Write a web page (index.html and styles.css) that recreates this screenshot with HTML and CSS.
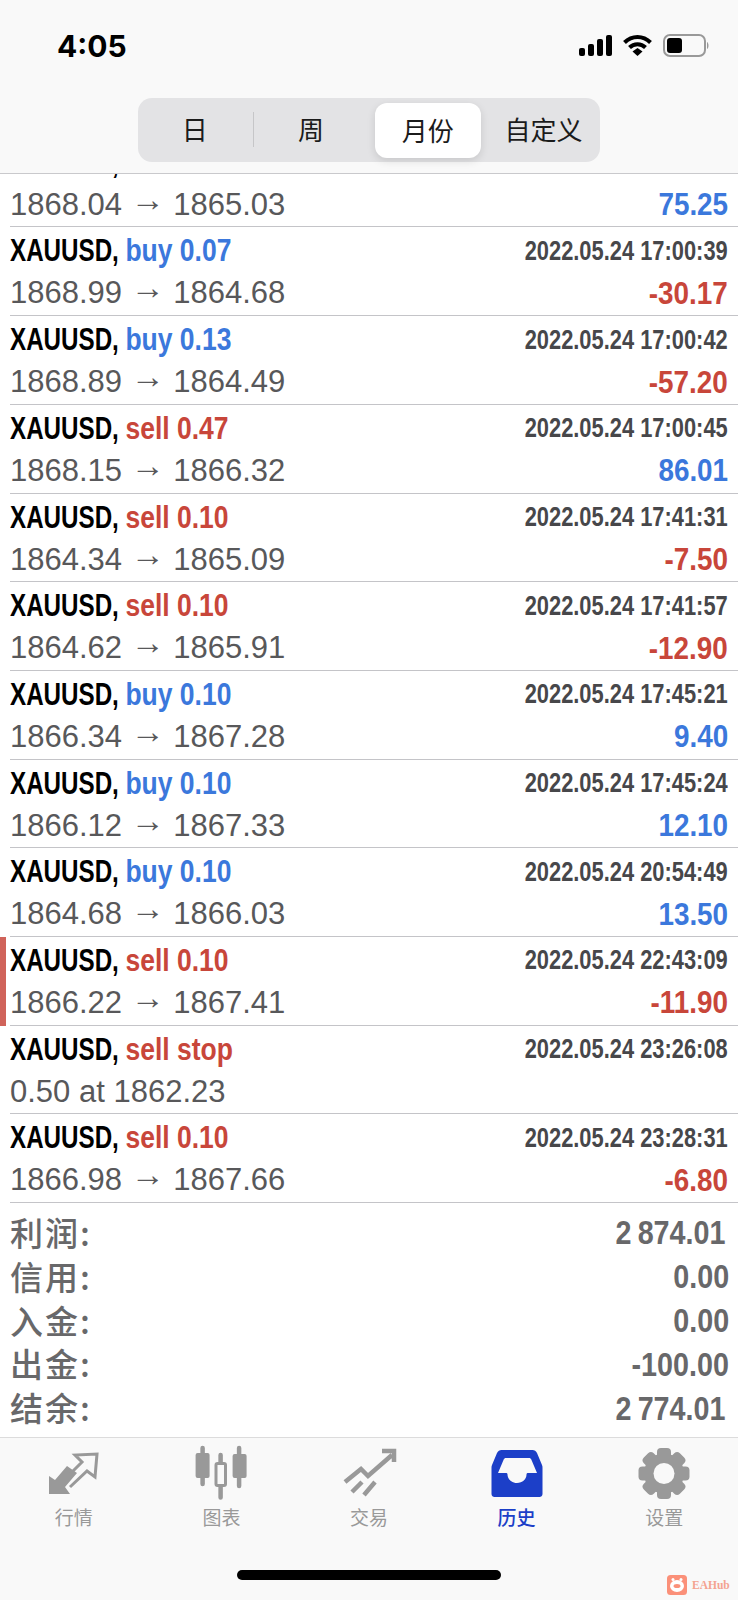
FILE: index.html
```html
<!DOCTYPE html>
<html lang="zh">
<head>
<meta charset="utf-8">
<title>历史</title>
<link rel="stylesheet" href="styles.css">
</head>
<body>
<div class="page">
  <header class="top">
    <div class="status">
      <span class="clock">4:05</span>
      <div class="status-icons">
        <svg class="ic-signal" width="33" height="21" viewBox="0 0 33 21"><rect x="0" y="13" width="6" height="8" rx="2"/><rect x="9" y="9" width="6" height="12" rx="2"/><rect x="18" y="4" width="6" height="17" rx="2"/><rect x="27" y="0" width="6" height="21" rx="2"/></svg>
        <svg class="ic-wifi" width="29" height="22" viewBox="0 0 29 22"><path d="M1.5 8.5C9 1 20 1 27.5 8.5" fill="none" stroke="#000" stroke-width="4"/><path d="M6.5 13.5C11 9 18 9 22.5 13.5" fill="none" stroke="#000" stroke-width="4"/><path d="M9.5 17.5L14.5 14l5 3.500L14.500 22z"/></svg>
        <svg class="ic-batt" width="46" height="23" viewBox="0 0 46 23"><rect x="1" y="1" width="41" height="21" rx="6" fill="none" stroke="#999" stroke-width="2"/><rect x="4" y="4" width="15" height="15" rx="3"/><path d="M44 8c2 1 2 6 0 7z" fill="#999"/></svg>
      </div>
    </div>
    <div class="seg">
      <div class="seg-item seg-divided">日</div>
      <div class="seg-item">周</div>
      <div class="seg-item seg-on">月份</div>
      <div class="seg-item">自定义</div>
    </div>
  </header>

  <main class="list">
    <div class="row"><div class="line"><span class="sym">XAUUSD, <span class="sell">sell 0.25</span></span><span class="time">2022.05.24 17:00:36</span></div><div class="line"><span class="px">1868.04 <span class="arrow">→</span> 1865.03</span><span class="val up">75.25</span></div></div>
    <div class="row"><div class="line"><span class="sym">XAUUSD, <span class="buy">buy 0.07</span></span><span class="time">2022.05.24 17:00:39</span></div><div class="line"><span class="px">1868.99 <span class="arrow">→</span> 1864.68</span><span class="val down">-30.17</span></div></div>
    <div class="row"><div class="line"><span class="sym">XAUUSD, <span class="buy">buy 0.13</span></span><span class="time">2022.05.24 17:00:42</span></div><div class="line"><span class="px">1868.89 <span class="arrow">→</span> 1864.49</span><span class="val down">-57.20</span></div></div>
    <div class="row"><div class="line"><span class="sym">XAUUSD, <span class="sell">sell 0.47</span></span><span class="time">2022.05.24 17:00:45</span></div><div class="line"><span class="px">1868.15 <span class="arrow">→</span> 1866.32</span><span class="val up">86.01</span></div></div>
    <div class="row"><div class="line"><span class="sym">XAUUSD, <span class="sell">sell 0.10</span></span><span class="time">2022.05.24 17:41:31</span></div><div class="line"><span class="px">1864.34 <span class="arrow">→</span> 1865.09</span><span class="val down">-7.50</span></div></div>
    <div class="row"><div class="line"><span class="sym">XAUUSD, <span class="sell">sell 0.10</span></span><span class="time">2022.05.24 17:41:57</span></div><div class="line"><span class="px">1864.62 <span class="arrow">→</span> 1865.91</span><span class="val down">-12.90</span></div></div>
    <div class="row"><div class="line"><span class="sym">XAUUSD, <span class="buy">buy 0.10</span></span><span class="time">2022.05.24 17:45:21</span></div><div class="line"><span class="px">1866.34 <span class="arrow">→</span> 1867.28</span><span class="val up">9.40</span></div></div>
    <div class="row"><div class="line"><span class="sym">XAUUSD, <span class="buy">buy 0.10</span></span><span class="time">2022.05.24 17:45:24</span></div><div class="line"><span class="px">1866.12 <span class="arrow">→</span> 1867.33</span><span class="val up">12.10</span></div></div>
    <div class="row"><div class="line"><span class="sym">XAUUSD, <span class="buy">buy 0.10</span></span><span class="time">2022.05.24 20:54:49</span></div><div class="line"><span class="px">1864.68 <span class="arrow">→</span> 1866.03</span><span class="val up">13.50</span></div></div>
    <div class="row row-mark"><div class="line"><span class="sym">XAUUSD, <span class="sell">sell 0.10</span></span><span class="time">2022.05.24 22:43:09</span></div><div class="line"><span class="px">1866.22 <span class="arrow">→</span> 1867.41</span><span class="val down">-11.90</span></div></div>
    <div class="row"><div class="line"><span class="sym">XAUUSD, <span class="sell">sell stop</span></span><span class="time">2022.05.24 23:26:08</span></div><div class="line"><span class="px">0.50 at 1862.23</span></div></div>
    <div class="row"><div class="line"><span class="sym">XAUUSD, <span class="sell">sell 0.10</span></span><span class="time">2022.05.24 23:28:31</span></div><div class="line"><span class="px">1866.98 <span class="arrow">→</span> 1867.66</span><span class="val down">-6.80</span></div></div>
  </main>

  <section class="summary">
    <div class="sum-row"><span>利润:</span><span class="sum-num sum-pad">2 874.01</span></div>
    <div class="sum-row"><span>信用:</span><span class="sum-num">0.00</span></div>
    <div class="sum-row"><span>入金:</span><span class="sum-num">0.00</span></div>
    <div class="sum-row"><span>出金:</span><span class="sum-num">-100.00</span></div>
    <div class="sum-row"><span>结余:</span><span class="sum-num sum-pad">2 774.01</span></div>
  </section>

  <footer class="bar">
    <nav class="tabs">
      <div class="tab">
        <svg class="tab-ic" width="70" height="55" viewBox="0 0 70 55"><path class="fill" d="M10 49V31l6 4 12-14 10 7-12 14 5 7z"/><path class="line-ic" d="M31 42l17-16 8 6 2-23-22 1 7 7-12 12"/></svg>
        <span class="tab-label">行情</span>
      </div>
      <div class="tab">
        <svg class="tab-ic" width="70" height="55" viewBox="0 0 70 55"><path class="line-ic thick" d="M16.600 3v36M34.600 10v42.500M53.100 3v38"/><rect class="fill" x="9.600" y="8" width="14" height="25" rx="2"/><rect class="fill" x="46.600" y="9" width="14" height="24" rx="2"/><rect class="hollow" x="30" y="18.500" width="9.500" height="22" rx="1.500"/></svg>
        <span class="tab-label">图表</span>
      </div>
      <div class="tab">
        <svg class="tab-ic" width="70" height="55" viewBox="0 0 70 55"><path class="line-ic heavy" d="M11 37l16-13 7 7 24-21M48 6h12v11M18 47l10-10M30 50l11-13"/></svg>
        <span class="tab-label">交易</span>
      </div>
      <div class="tab tab-on">
        <svg class="tab-ic" width="70" height="55" viewBox="0 0 70 55"><path class="blue" fill-rule="evenodd" d="M21.500 5h29c2 0 3.500 1 4.500 3l5 12c.5 1 .5 2 .5 3v26c0 2-1.500 3-3 3H12.500c-1.500 0-3-1-3-3V23c0-1 0-2 .5-3l5-12c1-2 2.500-3 4.500-3zM24 13c-1 0-2 .5-2.500 2L16 28h8c1 0 1.500 .5 1.500 1.500 0 4.500 4 8.500 9.500 8.500s9.500-4 9.500-8.500c0-1 .5-1.500 1.500-1.500h9l-5.500-13c-.5-1.500-1.500-2-2.500-2z"/></svg>
        <span class="tab-label">历史</span>
      </div>
      <div class="tab">
        <svg class="tab-ic" width="70" height="55" viewBox="0 0 70 55">
          <g class="gear"><circle cx="35" cy="28.500" r="20"/><rect x="28" y="3" width="14" height="51" rx="4"/><rect x="28" y="3" width="14" height="51" rx="4" transform="rotate(45 35 28.500)"/><rect x="28" y="3" width="14" height="51" rx="4" transform="rotate(90 35 28.500)"/><rect x="28" y="3" width="14" height="51" rx="4" transform="rotate(135 35 28.500)"/></g>
          <circle class="hole" cx="35" cy="28.500" r="10.500"/>
        </svg>
        <span class="tab-label">设置</span>
      </div>
    </nav>
    <div class="home"></div>
    <div class="mark">
      <svg width="20" height="20" viewBox="0 0 20 20"><rect width="20" height="20" rx="3.500" fill="#fb9079"/><circle cx="6" cy="4.500" r="1.500" fill="#fff"/><circle cx="14" cy="4.500" r="1.500" fill="#fff"/><ellipse cx="10" cy="11" rx="7" ry="6" fill="#fff"/><ellipse cx="10" cy="11" rx="3.500" ry="2" fill="#fb9079"/></svg>
      <span class="mark-text">EAHub</span>
    </div>
  </footer>
</div>
</body>
</html>
```

FILE: styles.css
```css
* { box-sizing: border-box; }
html, body { margin: 0; padding: 0; }
body { background: #fff; font-family: "Liberation Sans", "Noto Sans CJK SC", sans-serif; }
.page { width: 738px; height: 1600px; display: flex; flex-direction: column; overflow: hidden; }

.top { height: 174px; flex: none; background: #f9f9f9; border-bottom: 1px solid #c9c9cc; position: relative; z-index: 1; }
.status { height: 98px; padding: 30px 29px 0 57px; display: flex; justify-content: space-between; align-items: flex-start; }
.clock { font-family: Inter, "Liberation Sans", sans-serif; font-size: 30px; line-height: 32px; font-weight: 700; color: #000; }
.status-icons { display: flex; align-items: flex-start; padding-top: 4px; }
.ic-signal { margin-top: 1px; margin-right: 11px; }
.ic-wifi { margin-right: 11px; }

.seg { width: 462px; height: 64px; margin-left: 138px; background: #e3e3e5; border-radius: 14px; display: grid; grid-template-columns: repeat(4, 116.300px); }
.seg-item { font-family: "Noto Sans CJK SC", sans-serif; font-size: 26px; line-height: 62px; text-align: center; color: #1b1b1b; margin-left: -3px; }
.seg-divided { position: relative; }
.seg-divided::after { content: ""; position: absolute; right: 0; top: 14px; height: 35px; width: 1px; background: #c6c6c8; }
.seg-on { background: #fff; height: 55px; line-height: 53px; margin: 5px 6px 4px 4px; border-radius: 12px; box-shadow: 0 3px 8px rgba(0,0,0,.12); }

.list { flex: 1 1 0; min-height: 0; overflow: hidden; display: flex; flex-direction: column; justify-content: flex-end; background: #fff; }
.row { flex: none; height: 88.700px; padding: 3px 10px 0 10px; position: relative; }
.row::after { content: ""; position: absolute; left: 10px; right: 0; bottom: 0; height: 1px; background: #c4c4c8; }
.row-mark::before { content: ""; position: absolute; left: 0; top: 0; bottom: 0; width: 6px; background: #d0635a; }
.line { height: 42px; display: flex; justify-content: space-between; align-items: center; white-space: pre; }
.sym { display: inline-block; font-size: 31px; font-weight: 700; color: #000; transform: scaleX(.78); transform-origin: left center; }
.buy, .sell { display: inline-block; transform: scaleX(1.095); transform-origin: left center; }
.buy { color: #3b78dc; }
.sell { color: #c8463a; }
.time { display: inline-block; font-size: 27px; font-weight: 700; color: #47474a; transform: scaleX(.81); transform-origin: right center; }
.px { font-size: 31px; color: #58585a; }
.arrow { font-size: 34px; line-height: 0; vertical-align: 4px; }
.val { display: inline-block; font-size: 32px; font-weight: 700; transform: scaleX(.87); transform-origin: right center; }
.up { color: #3b78dc; }
.down { color: #c8463a; }

.summary { flex: none; height: 234px; padding: 7px 9px 0 10px; }
.sum-row { height: 43.800px; display: flex; justify-content: space-between; align-items: center; font-family: "Noto Sans CJK SC", sans-serif; font-size: 33px; font-weight: 500; letter-spacing: 2px; color: #68686a; }
.sum-num { display: inline-block; padding-top: 3px; font-family: "Liberation Sans", sans-serif; font-size: 33px; font-weight: 700; letter-spacing: 0; white-space: pre; word-spacing: -2px; transform: scaleX(.87); transform-origin: right center; }
.sum-pad { margin-right: 4px; }

.bar { flex: none; height: 163px; background: #f9f9f9; border-top: 1px solid #dcdcdc; position: relative; display: flex; flex-direction: column; }
.tabs { display: grid; grid-template-columns: repeat(5, 1fr); padding-top: 7px; }
.tab { display: flex; flex-direction: column; align-items: center; }
.tab-ic { display: block; }
.fill { fill: #999; }
.line-ic { fill: none; stroke: #999; stroke-width: 3; }
.thick { stroke-width: 4.500; stroke-linecap: round; }
.heavy { stroke-width: 4.500; }
.hollow { fill: #f9f9f9; stroke: #999; stroke-width: 3; }
.blue { fill: #1c3fc8; }
.gear { fill: #999; }
.hole { fill: #f9f9f9; }
.tab-label { font-family: "Noto Sans CJK SC", sans-serif; font-size: 19px; line-height: 28px; margin-top: 3px; color: #999; }
.tab-on .tab-label { color: #1c3fc8; font-weight: 500; }
.home { width: 264px; height: 10px; background: #000; border-radius: 5px; margin: 39px 0 0 237px; }
.mark { position: absolute; left: 667px; top: 137px; display: flex; align-items: center; gap: 5px; }
.mark svg { display: block; }
.mark-text { font-family: "Liberation Serif", serif; font-weight: 700; font-size: 11.500px; color: #f4a391; }
```
